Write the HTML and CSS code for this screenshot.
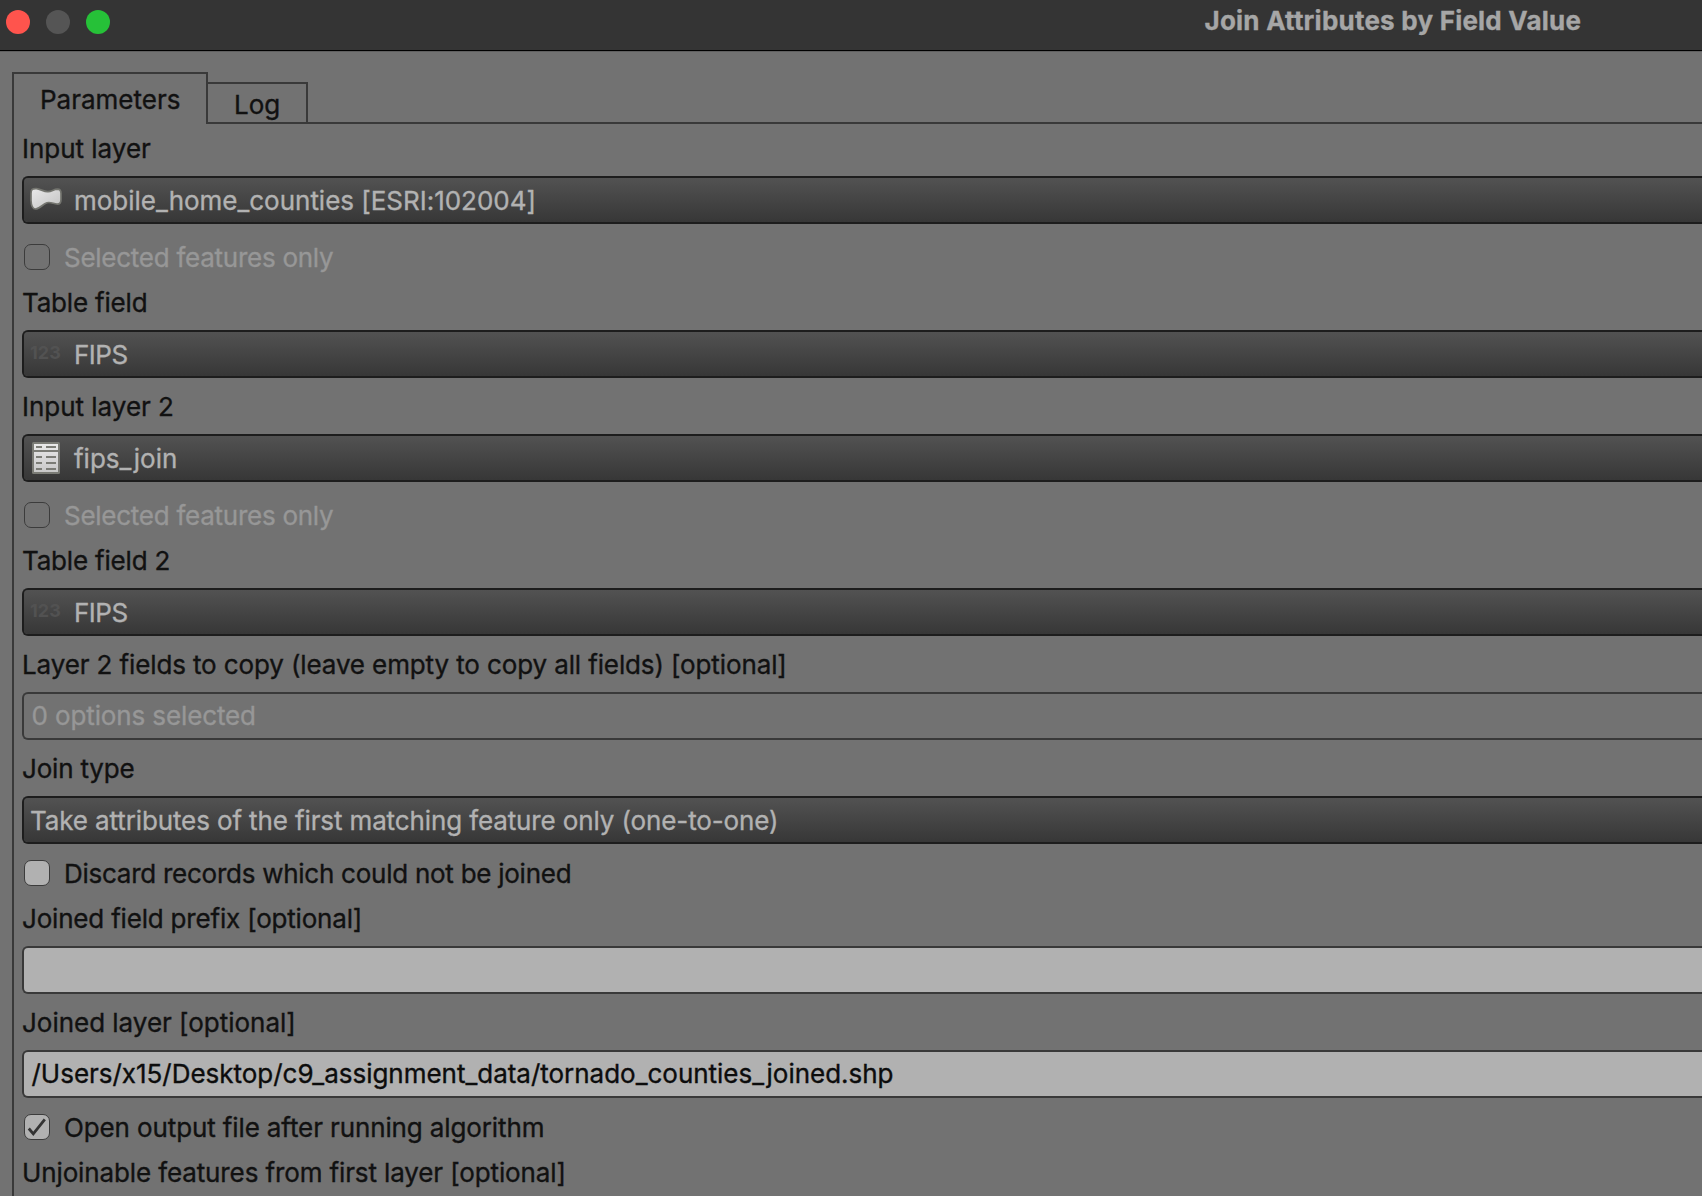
FILE: index.html
```html
<!DOCTYPE html>
<html lang="en">
<head>
<meta charset="utf-8">
<title>Join Attributes by Field Value</title>
<link rel="stylesheet" href="styles.css">
</head>
<body>
<div class="window">
  <header class="titlebar">
    <div class="lights"><span class="light close"></span><span class="light minimize"></span><span class="light zoom"></span></div>
    <h1 class="title">Join Attributes by Field Value</h1>
  </header>
  <nav class="tabs">
    <div class="tab active">Parameters</div>
    <div class="tab log">Log</div>
    <div class="tab-rest"></div>
  </nav>
  <main class="pane">
    <div class="label">Input layer</div>
    <div class="field combo">
      <svg class="icon" width="44" height="44" viewBox="0 0 44 44">
        <defs><linearGradient id="poly" x1="0" y1="0" x2="1" y2="1"><stop offset="0" stop-color="#e9e9e9"/><stop offset="1" stop-color="#c2c2c2"/></linearGradient></defs>
        <path d="M1 15.500C1 11.500 2.500 10.300 6.500 10.600C10.500 11 14 14 18 13.700C22 13.400 23.500 11.300 27.500 11.200C30.300 11.200 31 13 31 15.500V21.500C31 24.800 29.800 26.300 26.800 26C23.500 25.700 20.500 23.700 17 24.700C12.800 26 10 30.700 5.500 31C2.200 31 1.200 26.500 1 22.500Z" fill="url(#poly)" stroke="#74756f" stroke-width="1.700"/>
      </svg>
      <span>mobile_home_counties [ESRI:102004]</span>
    </div>
    <div class="check disabled low"><span class="box"></span><span class="tighter">Selected features only</span></div>
    <div class="label tight">Table field</div>
    <div class="field combo"><span class="numeric">123</span><span class="caps">FIPS</span></div>
    <div class="label spaced">Input layer 2</div>
    <div class="field combo">
      <svg class="icon" width="44" height="44" viewBox="0 0 44 44">
        <defs><linearGradient id="sheet" x1="0" y1="0" x2="0" y2="1"><stop offset="0" stop-color="#e9e9e9"/><stop offset="1" stop-color="#c8c8c8"/></linearGradient></defs>
        <rect x="2" y="6" width="28" height="32" rx="1.500" fill="#7b7c76"/>
        <path d="M4 8H28V14H4ZM4 16H28V36H4Z" fill="url(#sheet)"/>
        <path d="M6 11H12M16 11H26M6 21H12M16 21H26M6 27H12M16 27H26M6 33H12M16 33H26" stroke="#7b7c76" stroke-width="2"/>
      </svg>
      <span>fips_join</span>
    </div>
    <div class="check disabled low"><span class="box"></span><span class="tighter">Selected features only</span></div>
    <div class="label tight">Table field 2</div>
    <div class="field combo"><span class="numeric">123</span><span class="caps">FIPS</span></div>
    <div class="label spaced snug">Layer 2 fields to copy (leave empty to copy all fields) [optional]</div>
    <div class="field ghost"><span class="snug">0 options selected</span></div>
    <div class="label spaced tight">Join type</div>
    <div class="field combo"><span class="snug">Take attributes of the first matching feature only (one-to-one)</span></div>
    <div class="check"><span class="box filled"></span><span class="tighter">Discard records which could not be joined</span></div>
    <div class="label tight">Joined field prefix [optional]</div>
    <div class="field input"></div>
    <div class="label spaced">Joined layer [optional]</div>
    <div class="field input"><span>/Users/x15/Desktop/c9_assignment_data/tornado_counties_joined.shp</span></div>
    <div class="check"><span class="box filled"><svg width="22" height="22" viewBox="0 0 22 22"><path d="M2.800 12.500L7.300 17.800L18.800 3.300" fill="none" stroke="#343434" stroke-width="2.800"/></svg></span><span class="snug">Open output file after running algorithm</span></div>
    <div class="label snug">Unjoinable features from first layer [optional]</div>
  </main>
</div>
</body>
</html>
```
FILE: styles.css
```css
* { box-sizing: border-box; }
body {
  margin: 0;
  background: #727272;
  color: #111;
  font: 400 26px/32px Inter, sans-serif;
  letter-spacing: -0.02px;
  -webkit-text-stroke: 0.35px currentColor;
  white-space: nowrap;
}
.window { height: 1196px; overflow: hidden; }

.titlebar {
  height: 51px;
  display: flex;
  background: #343434;
  border-bottom: 1px solid #000;
  box-shadow: 0 1px 0 #606060;
}
.lights { display: flex; gap: 16px; padding: 10px 0 0 6px; width: 1204.5px; }
.light { width: 24px; height: 24px; border-radius: 50%; }
.close { background: #ff544d; }
.minimize { background: #555; }
.zoom { background: #26c138; }
.title {
  margin: 5px 0 0;
  font-size: 26px;
  font-weight: 700;
  letter-spacing: 0.22px;
  color: #a6a6a6;
}

.tabs { display: flex; align-items: flex-end; height: 73px; padding-left: 12px; }
.tab { border: 2px solid #393939; }
.active {
  width: 196px;
  height: 52px;
  padding: 10px 0 0 26px;
  border-bottom: 0;
  letter-spacing: 0;
}
.log { width: 102px; height: 42px; margin-left: -2px; padding: 5px 0 0 26px; letter-spacing: 0; }
.tab-rest { flex: 1; height: 2px; background: #393939; }

.pane {
  margin-left: 12px;
  padding: 9px 0 0 8px;
  height: 1072px;
  border-left: 2px solid #393939;
}
.label { height: 43px; }
.spaced { margin-top: 13px; }

.field {
  height: 48px;
  display: flex;
  align-items: center;
  border: 2px solid #393939;
  border-right: 0;
  border-radius: 6px 0 0 6px;
  padding-left: 7.5px;
}
.combo {
  border-color: #1d1d1d;
  background: linear-gradient(#525252, #373737) padding-box;
  color: #b2b2b2;
  padding: 1px 0 0 6px;
}
.input { background: #b1b1b1; color: #0c0c0c; }
.ghost { color: #979797; }
.icon { flex: none; margin-top: -1px; }
.numeric {
  width: 44px;
  font-size: 18px;
  font-weight: 700;
  line-height: 28px;
  letter-spacing: 0.1px;
  padding-bottom: 3px;
  color: #525252;
  -webkit-text-stroke: 0;
}

.check { height: 43px; margin-top: 16px; display: flex; gap: 14px; padding-left: 2px; }
.low { margin-top: 20px; }
.check span:last-child { margin-top: -2px; }
.box { width: 26px; height: 26px; border: 1.5px solid #3c3c3c; border-radius: 7px; display: flex; align-items: center; justify-content: center; }
.filled { background: #b1b1b1; }
.disabled { color: #979797; }

.snug { letter-spacing: -0.12px; }
.tight { letter-spacing: -0.19px; }
.tighter { letter-spacing: -0.26px; }
.caps { letter-spacing: -0.5px; }
```
